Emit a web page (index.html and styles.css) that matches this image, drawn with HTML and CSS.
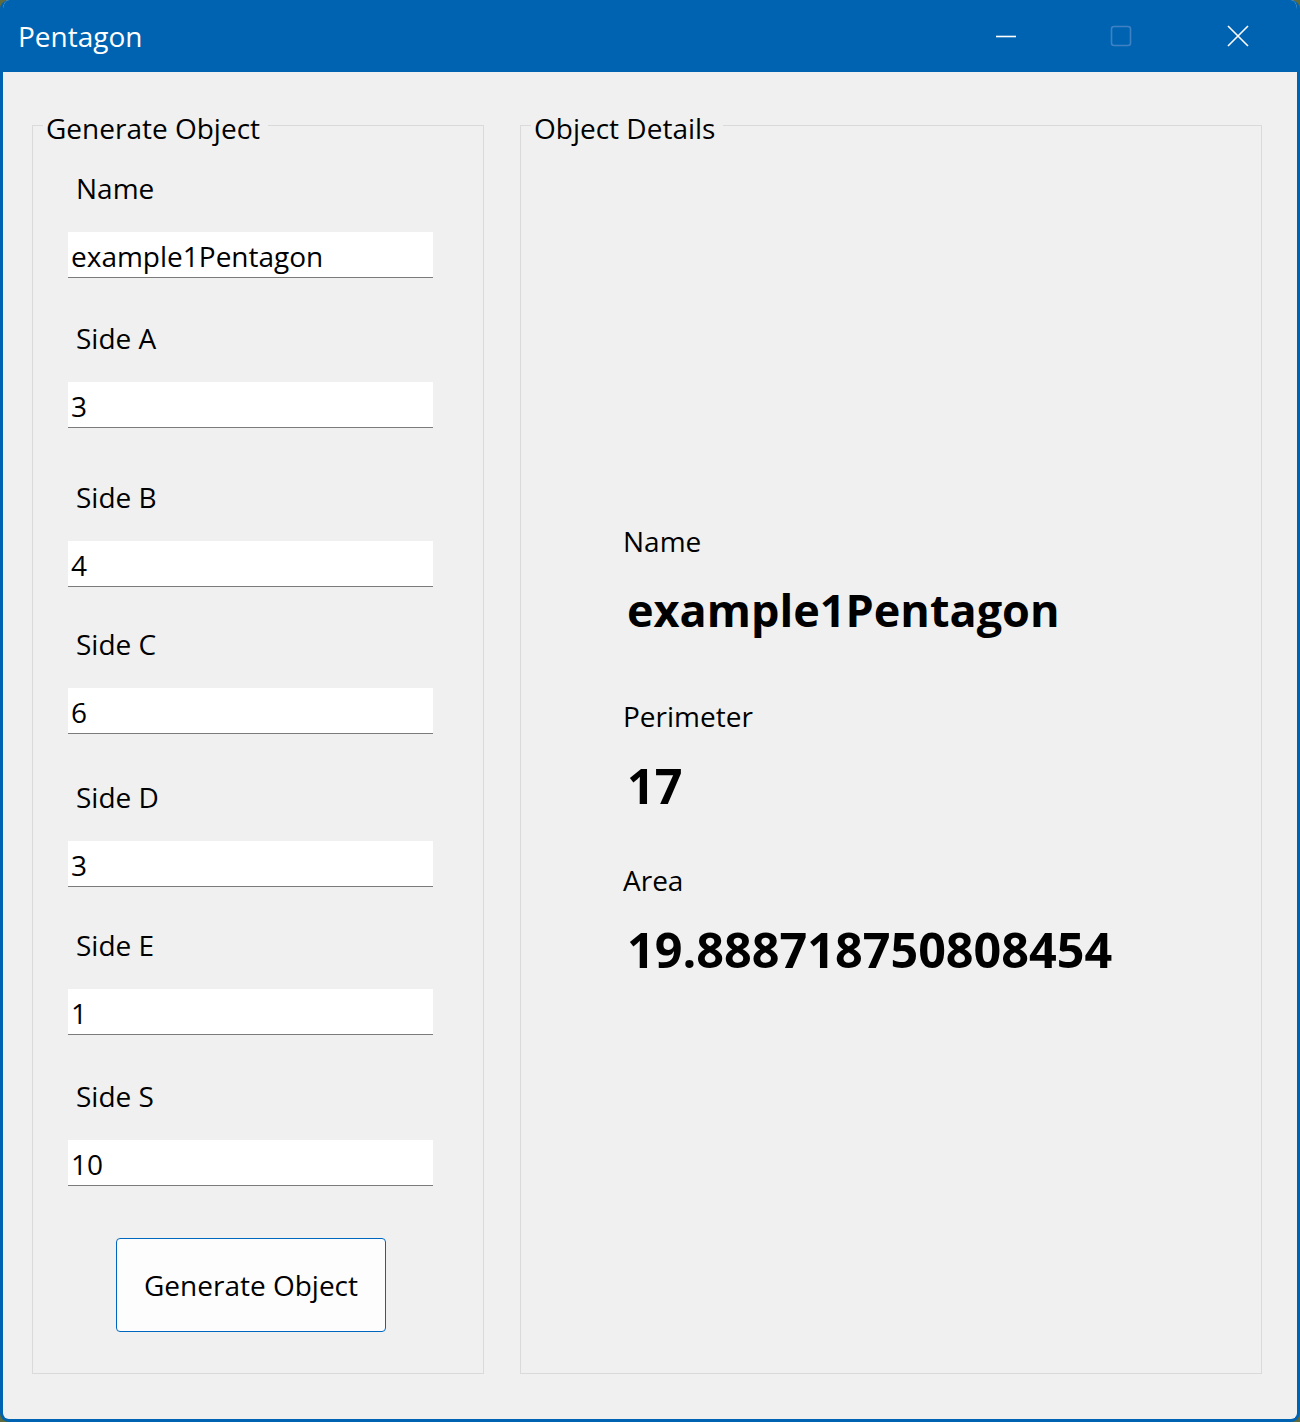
FILE: index.html
```html
<!DOCTYPE html>
<html lang="en">
<head>
<meta charset="utf-8">
<title>Pentagon</title>
<link rel="stylesheet" href="styles.css">
</head>
<body>
<div class="window">
  <header class="titlebar">
    <div class="title">Pentagon</div>
    <div class="caption-buttons">
      <div class="cap-btn">
        <svg width="20" height="20" viewBox="0 0 20 20"><line x1="0" y1="10.5" x2="20" y2="10.5" stroke="#fff" stroke-width="1.6"/></svg>
      </div>
      <div class="cap-btn cap-max">
        <svg width="22" height="22" viewBox="0 0 22 22"><rect x="1.5" y="1.5" width="19" height="19" rx="2.5" fill="none" stroke="#3f82c4" stroke-width="1.6"/></svg>
      </div>
      <div class="cap-btn">
        <svg width="22" height="22" viewBox="0 0 22 22"><path d="M1 1 L21 21 M21 1 L1 21" stroke="#fff" stroke-width="1.6" fill="none"/></svg>
      </div>
    </div>
  </header>
  <main class="content">
    <fieldset class="group group-left">
      <legend>Generate Object</legend>
      <div class="form">
        <label class="field-label">Name</label>
        <div class="input">example1Pentagon</div>
        <label class="field-label">Side A</label>
        <div class="input">3</div>
        <label class="field-label">Side B</label>
        <div class="input">4</div>
        <label class="field-label">Side C</label>
        <div class="input">6</div>
        <label class="field-label">Side D</label>
        <div class="input">3</div>
        <label class="field-label">Side E</label>
        <div class="input">1</div>
        <label class="field-label">Side S</label>
        <div class="input">10</div>
        <button class="btn">Generate Object</button>
      </div>
    </fieldset>
    <fieldset class="group group-right">
      <legend>Object Details</legend>
      <div class="details">
        <div class="d-label">Name</div>
        <div class="d-value d-name">example1Pentagon</div>
        <div class="d-label d-gap">Perimeter</div>
        <div class="d-value d-num">17</div>
        <div class="d-label d-gap2">Area</div>
        <div class="d-value d-num">19.888718750808454</div>
      </div>
    </fieldset>
  </main>
</div>
</body>
</html>
```
FILE: styles.css
```css
* { box-sizing: border-box; }
html, body {
  margin: 0;
  padding: 0;
  background: #5f6b3a;
}
body {
  width: 1300px;
  height: 1422px;
  font-family: "Open Sans", "Noto Sans", sans-serif;
  color: #000;
}
.window {
  width: 1300px;
  height: 1422px;
  background: #f0f0f0;
  border: 3px solid #0063b1;
  border-top: none;
  border-radius: 9px;
  overflow: hidden;
  display: flex;
  flex-direction: column;
}
.titlebar {
  height: 72px;
  background: #0063b1;
  margin: 0 -3px;
  display: flex;
  align-items: center;
  justify-content: space-between;
  flex-shrink: 0;
}
.title {
  color: #fff;
  font-size: 28px;
  padding-left: 18px;
  line-height: 38px;
}
.caption-buttons {
  display: flex;
  height: 72px;
  padding-right: 4px;
}
.cap-btn {
  width: 116px;
  display: flex;
  align-items: center;
  justify-content: center;
}
.cap-btn svg { display: block; margin-top: -1px; }
.cap-max svg { margin-left: -3px; }

.content {
  flex: 1;
  display: grid;
  grid-template-columns: 452px 742px;
  column-gap: 36px;
  padding: 31px 36px 45px 29px;
}
.group {
  margin: 0;
  padding: 0;
  border: 1px solid #dadada;
  min-width: 0;
}
.group legend {
  font-size: 28px;
  line-height: 38px;
  margin-left: 10px;
  padding: 6px 8px 0 3px;
}
.form {
  display: flex;
  flex-direction: column;
  padding-left: 35px;
  width: 400px;
}
.field-label {
  font-size: 28px;
  line-height: 38px;
  padding-left: 8px;
  margin-bottom: 25px;
}
.form .field-label:nth-of-type(1) { margin-top: 22px; }
.form .field-label:nth-of-type(2) { margin-top: 41px; }
.form .field-label:nth-of-type(3) { margin-top: 50px; }
.form .field-label:nth-of-type(4) { margin-top: 38px; }
.form .field-label:nth-of-type(5) { margin-top: 44px; }
.form .field-label:nth-of-type(6) { margin-top: 39px; }
.form .field-label:nth-of-type(7) { margin-top: 42px; }
.input {
  width: 365px;
  height: 46px;
  background: #fff;
  border-bottom: 1px solid #7b7b7b;
  font-size: 28px;
  line-height: 48px;
  padding-left: 3px;
}
.btn {
  align-self: flex-start;
  margin-left: 48px;
  margin-top: 52px;
  width: 270px;
  height: 94px;
  background: #fdfdfd;
  border: 1px solid #0067c0;
  border-radius: 4px;
  font-family: inherit;
  font-size: 28px;
  color: #000;
  padding: 0;
}
.group-right {
  display: flex;
}
.details {
  height: 100%;
  display: flex;
  flex-direction: column;
  justify-content: center;
  padding-left: 102px;
  padding-bottom: 20px;
}
.d-label {
  font-size: 28px;
  line-height: 38px;
}
.d-value {
  font-weight: 700;
  line-height: 60px;
  padding-left: 4px;
  margin-top: 20px;
}
.d-name { font-size: 45px; }
.d-num { font-size: 48.5px; }
.d-gap { margin-top: 57px; }
.d-gap2 { margin-top: 46px; }
```
